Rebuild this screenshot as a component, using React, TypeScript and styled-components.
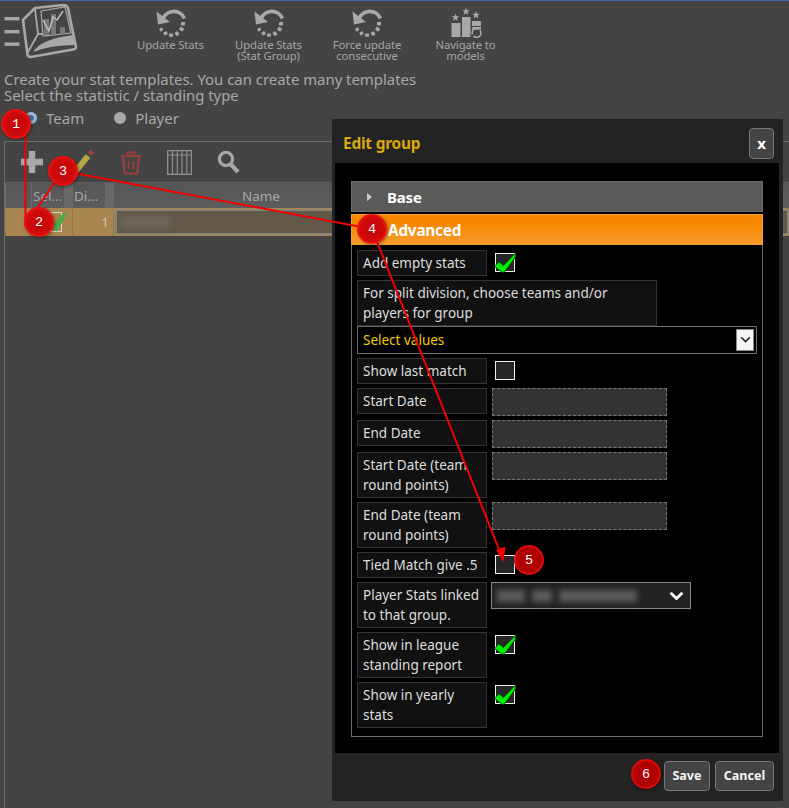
import React from "react";
import styled, { createGlobalStyle } from "styled-components";

const FONT = `"Noto Sans", "Open Sans", "Liberation Sans", sans-serif`;

const Global = createGlobalStyle`
  html, body { margin: 0; padding: 0; background: #444444; }
  body { font-family: ${FONT}; }
  #root { width: 789px; height: 808px; }
`;

const Page = styled.div`
  position: relative;
  width: 789px;
  height: 808px;
  overflow: hidden;
  background: #444444;
  border-top: 1px solid #3d6aa8;
  box-sizing: border-box;
  display: flex;
  flex-direction: column;
  color: #a8a8a8;
`;

const TopBar = styled.div`
  display: flex;
  align-items: flex-start;
  height: 70px;
  padding-left: 3px;
  flex: none;
`;
const MenuLogo = styled.div`
  width: 84px;
  height: 60px;
  padding-top: 2px;
  flex: none;
`;
const ToolList = styled.div`
  display: flex;
  padding-left: 33px;
  padding-top: 6px;
`;
const Tool = styled.div<{ $w: number }>`
  width: ${(p) => p.$w}px;
  display: flex;
  flex-direction: column;
  align-items: center;
  text-align: center;
  font-size: 11.3px;
  line-height: 11px;
  letter-spacing: -0.1px;
  color: #a4a4a4;
  svg { display: block; margin-bottom: 1px; }
`;

const Intro = styled.div`
  padding-left: 4px;
  font-size: 14.9px;
  line-height: 16px;
  color: #a8a8a8;
  flex: none;
`;
const RadioRow = styled.div`
  display: flex;
  align-items: center;
  height: 24px;
  margin-top: 3px;
  padding-left: 25px;
  font-size: 15px;
  flex: none;
`;
const Radio = styled.span<{ $on?: boolean }>`
  width: 12px;
  height: 12px;
  border-radius: 50%;
  background: ${(p) => (p.$on ? "#3f78b4" : "#a8a8a8")};
  box-shadow: ${(p) => (p.$on ? "inset 0 0 0 3px #9fb6cc" : "none")};
  margin-right: 9px;
  flex: none;
`;
const RadioLabel = styled.span`
  margin-right: 30px;
`;

const Panel = styled.div`
  margin: 11px 0 0 4px;
  flex: 1;
  border: 1px solid #6e6e6e;
  border-right: none;
  border-bottom: none;
  display: flex;
  flex-direction: column;
`;
const GridTools = styled.div`
  display: flex;
  align-items: center;
  height: 40px;
  padding-left: 15px;
  flex: none;
`;
const GridTool = styled.span<{ $w: number }>`
  width: ${(p) => p.$w}px;
  display: flex;
  flex: none;
`;
const GridHeader = styled.div`
  display: flex;
  height: 26px;
  background: linear-gradient(#555555, #5d5d5d);
  border-top: 1px solid #5f5f5f;
  box-sizing: border-box;
  flex: none;
  font-size: 13.4px;
  color: #a8a8a8;
`;
const Head = styled.div<{ $w?: number; $pad?: number }>`
  width: ${(p) => (p.$w ? `${p.$w}px` : "auto")};
  flex: ${(p) => (p.$w ? "none" : "1")};
  display: flex;
  align-items: center;
  box-sizing: border-box;
  padding-left: ${(p) => p.$pad ?? 1}px;
  border-left: 1px solid #6c6c6c;
  overflow: hidden;
  white-space: nowrap;
`;
const Handle = styled.span`
  margin-left: auto;
  width: 8px;
  height: 100%;
  background: #686868;
  flex: none;
`;
const GridRow = styled.div`
  display: flex;
  height: 28px;
  background: #a9854f;
  flex: none;
  font-size: 13.4px;
  color: #c9c4bb;
`;
const Cell = styled.div<{ $w?: number }>`
  width: ${(p) => (p.$w ? `${p.$w}px` : "auto")};
  flex: ${(p) => (p.$w ? "none" : "1")};
  box-sizing: border-box;
  border-left: 1px solid #8d7a58;
  display: flex;
  align-items: center;
  position: relative;
`;
const NumberCell = styled(Cell)`
  justify-content: flex-end;
  padding-right: 4px;
`;
const RowCheck = styled.span`
  width: 20px;
  height: 20px;
  margin-left: 10px;
  border: 1px solid #d8d4cc;
  box-sizing: border-box;
`;
const CheckMark = styled.svg`
  position: absolute;
`;
const NameBox = styled.div`
  margin: 0 0 0 1px;
  flex: 1;
  height: 26px;
  background: #61584a;
  border: 2px solid #8c8474;
  box-sizing: border-box;
  display: flex;
  align-items: center;
  padding-left: 3px;
`;
const Blurred = styled.span<{ $w: number; $h: number; $c: string }>`
  display: block;
  width: ${(p) => p.$w}px;
  height: ${(p) => p.$h}px;
  background: ${(p) => p.$c};
  filter: blur(3px);
  flex: none;
`;
const BlurGroup = styled.span`
  display: flex;
  gap: 7px;
`;

/* ---------- modal ---------- */
const Modal = styled.div`
  position: absolute;
  left: 332px;
  top: 118px;
  width: 451px;
  height: 682px;
  background: #232323;
  display: flex;
  flex-direction: column;
`;
const ModalHead = styled.div`
  height: 44px;
  flex: none;
  display: flex;
  align-items: center;
  justify-content: space-between;
  padding: 4px 9px 0 11px;
  box-sizing: border-box;
`;
const ModalTitle = styled.div`
  font-size: 15.4px;
  font-weight: 700;
  color: #d9a90a;
  letter-spacing: -0.2px;
`;
const CloseBtn = styled.button`
  width: 25px;
  height: 31px;
  padding: 0;
  background: #444444;
  border: 1px solid #777777;
  border-radius: 4px;
  color: #ffffff;
  font: 700 15px ${FONT};
`;
const ModalBody = styled.div`
  flex: 1;
  margin: 0 4px 0 3px;
  background: #000000;
  padding: 18px 16px 0 16px;
  box-sizing: border-box;
`;
const AccHead = styled.div<{ $open?: boolean }>`
  height: 31px;
  box-sizing: border-box;
  display: flex;
  align-items: center;
  font-size: ${(p) => (p.$open ? "15.3px" : "15px")};
  font-weight: 700;
  letter-spacing: -0.2px;
  color: #ffffff;
  border: 1px solid ${(p) => (p.$open ? "#f7a030" : "#6e6e6e")};
  background: ${(p) =>
    p.$open ? "linear-gradient(#f58700 30%, #f89c2e)" : "#5a5a5a"};
  margin-bottom: ${(p) => (p.$open ? "0" : "2px")};
  padding-left: ${(p) => (p.$open ? "36px" : "15px")};
`;
const Caret = styled.span`
  width: 0;
  height: 0;
  border-left: 5px solid #c8c8c8;
  border-top: 4px solid transparent;
  border-bottom: 4px solid transparent;
  margin-right: 15px;
`;
const AccBody = styled.div`
  height: 492px;
  box-sizing: border-box;
  border: 1px solid #6e6e6e;
  border-top: none;
  padding: 5px 5px 0 5px;
  display: flex;
  flex-direction: column;
  gap: 4px;
`;
const Row = styled.div`
  display: flex;
  align-items: flex-start;
`;
const Label = styled.div<{ $wide?: boolean }>`
  width: ${(p) => (p.$wide ? "300px" : "130px")};
  box-sizing: border-box;
  background: #111111;
  border: 1px solid #333333;
  padding: 2px ${(p) => (p.$wide ? "30px" : "4px")} 2px 5px;
  min-height: 26px;
  font-size: 13.5px;
  line-height: 20px;
  color: #dedede;
  flex: none;
`;
const Stack = styled.div`
  display: flex;
  flex-direction: column;
`;
const MultiSelect = styled.div`
  height: 28px;
  width: 400px;
  box-sizing: border-box;
  border: 1px solid #6e6e6e;
  background: #000000;
  display: flex;
  align-items: center;
  justify-content: space-between;
  padding: 0 1px 0 5px;
  font-size: 13.5px;
  color: #f0cc00;
`;
const SelectBtn = styled.span`
  width: 18px;
  height: 22px;
  background: #f4f4f4;
  display: flex;
  align-items: center;
  justify-content: center;
  border: 1px solid #888;
  box-sizing: border-box;
  margin-right: 1px;
`;
const Check = styled.span`
  margin: 3px 0 0 8px;
  width: 20px;
  height: 19px;
  box-sizing: border-box;
  border: 1px solid #f0f0f0;
  background: #262626;
  position: relative;
  flex: none;
  svg { position: absolute; left: -2px; top: -3px; }
`;
const DateInput = styled.div`
  margin-left: 5px;
  width: 175px;
  height: 28px;
  box-sizing: border-box;
  background: #333333;
  border: 1px dashed #777777;
`;
const PlayerSelect = styled.div`
  margin-left: 4px;
  width: 200px;
  height: 27px;
  box-sizing: border-box;
  background: #222222;
  border: 1px solid #888888;
  display: flex;
  align-items: center;
  justify-content: space-between;
  padding: 0 6px 0 5px;
`;
const ModalFoot = styled.div`
  height: 48px;
  flex: none;
  box-sizing: border-box;
  display: flex;
  justify-content: flex-end;
  align-items: center;
  gap: 5px;
  padding: 0 9px 3px 0;
`;
const FootBtn = styled.button<{ $w: number }>`
  width: ${(p) => p.$w}px;
  height: 30px;
  padding: 0;
  background: #444444;
  border: 1px solid #777777;
  border-radius: 4px;
  color: #f4f4f4;
  font: 700 12.6px ${FONT};
`;

/* ---------- annotations ---------- */
const Lines = styled.svg`
  position: absolute;
  left: 0;
  top: -1px;
  pointer-events: none;
`;
const Badge = styled.div<{ $x: number; $y: number; $dark?: boolean }>`
  position: absolute;
  left: ${(p) => p.$x - 15}px;
  top: ${(p) => p.$y - 16}px;
  width: 30px;
  height: 30px;
  box-sizing: border-box;
  border-radius: 50%;
  background: ${(p) =>
    p.$dark
      ? "#b00000"
      : "radial-gradient(circle at 50% 50%, #c80808 40%, #e01010 100%)"};
  border: 2px solid ${(p) => (p.$dark ? "#dd0a0a" : "#e81010")};
  box-shadow: 1px 1px 3px rgba(0, 0, 0, 0.45);
  color: #ffffff;
  font: 500 13.5px "Liberation Mono", monospace;
  display: flex;
  align-items: center;
  justify-content: center;
`;

/* ---------- drawings ---------- */
const Refresh = () => (
  <svg width="32" height="31" viewBox="0 0 32 31">
    <path d="M8.5 13 A11.5 11.5 0 0 1 30 12.5" transform="translate(-0.5 -1)" fill="none" stroke="#a8a8a8" strokeWidth="3.6" />
    <path d="M1.5 4.5 L3 17.5 L15 15 Z" fill="#a8a8a8" />
    <g fill="#a8a8a8">
      <rect x="26" y="15" width="4" height="3.4" rx="0.6" />
      <rect x="24.6" y="20.4" width="4.2" height="3.6" rx="0.8" transform="rotate(30 26.7 22)" />
      <rect x="20" y="24.8" width="4" height="3.6" rx="0.8" transform="rotate(55 22 26.6)" />
      <rect x="14" y="26.4" width="4" height="3.4" rx="0.8" />
      <rect x="8.6" y="24.6" width="3.8" height="3.4" rx="0.8" transform="rotate(-30 10.5 26.3)" />
      <rect x="4.4" y="21" width="3.6" height="3" rx="0.8" transform="rotate(-40 6.2 22.5)" />
    </g>
  </svg>
);
const Star = ({ x, y, s = 4 }: { x: number; y: number; s?: number }) => {
  const pts: string[] = [];
  for (let i = 0; i < 10; i++) {
    const r = i % 2 ? s * 0.42 : s;
    const a = -Math.PI / 2 + (i * Math.PI) / 5;
    pts.push(`${(x + r * Math.cos(a)).toFixed(2)},${(y + r * Math.sin(a)).toFixed(2)}`);
  }
  return <polygon points={pts.join(" ")} fill="#a8a8a8" />;
};
const Podium = () => (
  <svg width="32" height="31" viewBox="0 0 32 31">
    <Star x={16} y={4.5} s={4} />
    <Star x={5.5} y={10.5} s={4} />
    <Star x={26} y={8} s={4} />
    <g fill="#a8a8a8">
      <rect x="1.5" y="16" width="9" height="14" />
      <rect x="12" y="10" width="8.5" height="20" />
      <rect x="22" y="14" width="9" height="5" />
      <rect x="22" y="20" width="9" height="2.5" />
    </g>
    <circle cx="26.5" cy="26" r="4.4" fill="none" stroke="#a8a8a8" strokeWidth="1.6" strokeDasharray="10 2" />
  </svg>
);
const Logo = () => (
  <svg width="76" height="56" viewBox="0 0 76 56">
    <g fill="#a8a8a8">
      <rect x="1.5" y="14" width="15" height="3.4" />
      <rect x="1.5" y="27" width="15" height="3.4" />
      <rect x="1.5" y="39.5" width="15" height="3.4" />
    </g>
    <path d="M20 17 L32 5 L60 2 Q64 2 65 5 L73 44 Q73 46 70 46.5 L28 54 Q25 54 24.5 51.5 Z" fill="none" stroke="#a8a8a8" strokeWidth="2.6" strokeLinejoin="round" />
    <path d="M32 6 L35 31 L25 49 M35 31 L40 31" fill="none" stroke="#a8a8a8" strokeWidth="1.8" />
    <path d="M38 8 L62 4 L68 30 L40 33 Z" fill="none" stroke="#a8a8a8" strokeWidth="1.2" />
    <path d="M30 49 Q38 36 70 32 L72 42 Q48 42 30 49 Z" fill="#a8a8a8" />
    <g fill="#787878">
      <rect x="41" y="16" width="5" height="16" />
      <rect x="48" y="11" width="5" height="20" />
      <rect x="57" y="24" width="5" height="7" />
    </g>
    <path d="M40 17 L46 28 L50 14 L54 17 L60 8" fill="none" stroke="#c0c0c0" strokeWidth="1.5" />
  </svg>
);
const GreenCheck = () => (
  <svg width="24" height="24" viewBox="0 0 24 24">
    <path d="M0.5 15.5 L4.7 10.7 L9.5 14.5 L22 1.5 L21.5 6 L10.5 21 L8 21.5 Z" fill="#00ee00" stroke="#063306" strokeWidth="0.8" strokeLinejoin="round" />
  </svg>
);
const Chevron = ({ color, w, sw }: { color: string; w: number; sw: number }) => (
  <svg width={w} height={w * 0.65} viewBox="0 0 14 9">
    <path d="M1.5 1.5 L7 7 L12.5 1.5" fill="none" stroke={color} strokeWidth={sw} />
  </svg>
);
const PlusIcon = () => (
  <svg width="24" height="24" viewBox="0 0 26 26">
    <path d="M9.5 1 h7 v8.5 h8.5 v7 h-8.5 v8.5 h-7 v-8.5 h-8.5 v-7 h8.5 Z" fill="#a8a8a8" />
  </svg>
);
const PencilIcon = () => (
  <svg width="20" height="24" viewBox="0 0 20 24">
    <path d="M2 21 L14 6" stroke="#b0aa45" strokeWidth="6" />
    <path d="M15.5 4 L18 1" stroke="#a8423f" strokeWidth="4.6" />
  </svg>
);
const TrashIcon = () => (
  <svg width="22" height="25" viewBox="0 0 22 25" fill="none" stroke="#983f3f" strokeWidth="2.4">
    <path d="M1 6 H21" />
    <path d="M7.5 5 V2.2 H14.5 V5" strokeWidth="2" />
    <path d="M3.2 7 L4.6 22.5 Q4.8 23.6 6 23.6 H16 Q17.2 23.6 17.4 22.5 L18.8 7" />
    <path d="M8.5 11 V19 M13.5 11 V19" strokeWidth="1.8" />
  </svg>
);
const ColumnsIcon = () => (
  <svg width="25" height="25" viewBox="0 0 25 25" fill="none" stroke="#8e8e8e" strokeWidth="1.2">
    <rect x="0.6" y="0.6" width="23.8" height="23.8" strokeWidth="1.4" />
    <path d="M0.6 5 H24.4 M5.5 0.6 V24.4 M10.3 0.6 V24.4 M15 0.6 V24.4 M19.8 0.6 V24.4" />
  </svg>
);
const SearchIcon = () => (
  <svg width="23" height="24" viewBox="0 0 23 24" fill="none" stroke="#a8a8a8">
    <circle cx="9" cy="9" r="6.6" strokeWidth="3.2" />
    <path d="M13.5 14 L21 22" strokeWidth="4.2" />
  </svg>
);

const tools = [
  { w: 101, lines: ["Update Stats"] },
  { w: 95, lines: ["Update Stats", "(Stat Group)"] },
  { w: 102, lines: ["Force update", "consecutive"] },
];

export default function App() {
  return (
    <Page>
      <Global />
      <TopBar>
        <MenuLogo>
          <Logo />
        </MenuLogo>
        <ToolList>
          {tools.map((t) => (
            <Tool key={t.lines[0] + t.w} $w={t.w}>
              <Refresh />
              {t.lines.map((l) => (
                <span key={l}>{l}</span>
              ))}
            </Tool>
          ))}
          <Tool $w={95}>
            <Podium />
            <span>Navigate to</span>
            <span>models</span>
          </Tool>
        </ToolList>
      </TopBar>
      <Intro>
        <div>Create your stat templates. You can create many templates</div>
        <div>Select the statistic / standing type</div>
      </Intro>
      <RadioRow>
        <Radio $on />
        <RadioLabel>Team</RadioLabel>
        <Radio />
        <RadioLabel>Player</RadioLabel>
      </RadioRow>
      <Panel>
        <GridTools>
          <GridTool $w={54}><PlusIcon /></GridTool>
          <GridTool $w={46}><PencilIcon /></GridTool>
          <GridTool $w={47}><TrashIcon /></GridTool>
          <GridTool $w={50}><ColumnsIcon /></GridTool>
          <GridTool $w={30}><SearchIcon /></GridTool>
        </GridTools>
        <GridHeader>
          <Head $w={26} />
          <Head $w={41}>
            Sel...
            <Handle />
          </Head>
          <Head $w={41}>
            Di...
            <Handle />
          </Head>
          <Head $pad={128}>Name</Head>
        </GridHeader>
        <GridRow>
          <Cell $w={26} />
          <Cell $w={41}>
            <RowCheck />
            <CheckMark width="16" height="22" viewBox="0 0 16 22" style={{ left: 19, top: 3 }}>
              <path d="M2 15 L13 1 L15 4 L6 21 Z" fill="#4aaa44" />
            </CheckMark>
          </Cell>
          <NumberCell $w={41}>1</NumberCell>
          <Cell>
            <NameBox>
              <Blurred $w={50} $h={12} $c="#6f675a" />
            </NameBox>
          </Cell>
        </GridRow>
      </Panel>

      <Modal>
        <ModalHead>
          <ModalTitle>Edit group</ModalTitle>
          <CloseBtn>x</CloseBtn>
        </ModalHead>
        <ModalBody>
          <AccHead>
            <Caret />
            Base
          </AccHead>
          <AccHead $open>Advanced</AccHead>
          <AccBody>
            <Row>
              <Label>Add empty stats</Label>
              <Check><GreenCheck /></Check>
            </Row>
            <Stack>
              <Label $wide>For split division, choose teams and/or players for group</Label>
              <MultiSelect>
                Select values
                <SelectBtn><Chevron color="#222" w={11} sw={2} /></SelectBtn>
              </MultiSelect>
            </Stack>
            <Row>
              <Label>Show last match</Label>
              <Check />
            </Row>
            <Row>
              <Label>Start Date</Label>
              <DateInput />
            </Row>
            <Row>
              <Label>End Date</Label>
              <DateInput />
            </Row>
            <Row>
              <Label>Start Date (team round points)</Label>
              <DateInput />
            </Row>
            <Row>
              <Label>End Date (team round points)</Label>
              <DateInput />
            </Row>
            <Row>
              <Label>Tied Match give .5</Label>
              <Check />
            </Row>
            <Row>
              <Label>Player Stats linked to that group.</Label>
              <PlayerSelect>
                <BlurGroup>
                  <Blurred $w={28} $h={12} $c="#5e5e5e" />
                  <Blurred $w={20} $h={12} $c="#5e5e5e" />
                  <Blurred $w={78} $h={12} $c="#5e5e5e" />
                </BlurGroup>
                <Chevron color="#ffffff" w={15} sw={2.6} />
              </PlayerSelect>
            </Row>
            <Row>
              <Label>Show in league standing report</Label>
              <Check><GreenCheck /></Check>
            </Row>
            <Row>
              <Label>Show in yearly stats</Label>
              <Check><GreenCheck /></Check>
            </Row>
          </AccBody>
        </ModalBody>
        <ModalFoot>
          <FootBtn $w={46}>Save</FootBtn>
          <FootBtn $w={59}>Cancel</FootBtn>
        </ModalFoot>
      </Modal>

      <Lines width="789" height="808" viewBox="0 0 789 808">
        <g stroke="#f00000" strokeWidth="2" fill="none">
          <path d="M25.5 124 V222" />
          <path d="M62 172 L31 217" />
          <path d="M63 171 L372 229" />
          <path d="M372 229 L500 552" />
        </g>
        <path d="M503.5 562.5 L496 550 L505.5 546.5 Z" fill="#f00000" />
      </Lines>
      <Badge $x={16} $y={124}>1</Badge>
      <Badge $x={39} $y={222}>2</Badge>
      <Badge $x={63} $y={171}>3</Badge>
      <Badge $x={372} $y={229}>4</Badge>
      <Badge $x={529} $y={560} $dark>5</Badge>
      <Badge $x={646} $y={774} $dark>6</Badge>
    </Page>
  );
}
